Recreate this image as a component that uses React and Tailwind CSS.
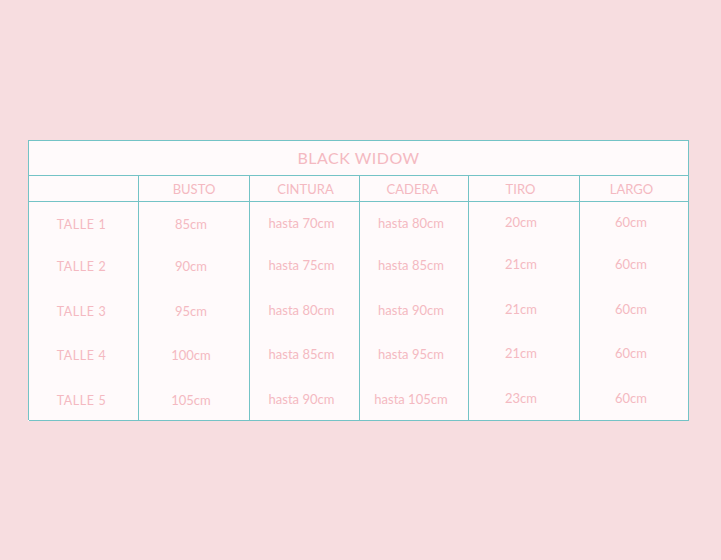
import React from 'react';

const rows = [
    { talle: 'TALLE 1', busto: '85cm', cintura: 'hasta 70cm', cadera: 'hasta 80cm', tiro: '20cm', largo: '60cm', h: 'h-[44px]', pt: 'pt-[4px]' },
    { talle: 'TALLE 2', busto: '90cm', cintura: 'hasta 75cm', cadera: 'hasta 85cm', tiro: '21cm', largo: '60cm', h: 'h-[44px]', pt: 'pt-0' },
    { talle: 'TALLE 3', busto: '95cm', cintura: 'hasta 80cm', cadera: 'hasta 90cm', tiro: '21cm', largo: '60cm', h: 'h-[44px]', pt: 'pt-[2px]' },
    { talle: 'TALLE 4', busto: '100cm', cintura: 'hasta 85cm', cadera: 'hasta 95cm', tiro: '21cm', largo: '60cm', h: 'h-[44px]', pt: 'pt-[2px]' },
    { talle: 'TALLE 5', busto: '105cm', cintura: 'hasta 90cm', cadera: 'hasta 105cm', tiro: '23cm', largo: '60cm', h: 'h-[42px]', pt: 'pt-[6px]' },
];

const headers = [
    { label: 'BUSTO', cls: 'pl-0' },
    { label: 'CINTURA', cls: 'pl-[2px]' },
    { label: 'CADERA', cls: 'pr-[3px]' },
    { label: 'TIRO', cls: 'pr-[7px]' },
    { label: 'LARGO', cls: 'pr-[5px]' },
];

const cell = 'border-x border-[#74c3c6] p-0 pr-[6px] text-center text-[13px]';

const App = () => {
    return (
        <div className="min-h-[560px] w-full bg-[#f7dde0] pt-[140px] pl-[28px]" style={{ fontFamily: '"Lato", "Open Sans", sans-serif' }}>
            <table className="border-collapse bg-[#fffafb] text-[#f4b9c1] table-fixed w-[660px]">
                <colgroup>
                    <col className="w-[110px]" />
                    <col className="w-[111px]" />
                    <col className="w-[110px]" />
                    <col className="w-[109px]" />
                    <col className="w-[111px]" />
                    <col className="w-[109px]" />
                </colgroup>
                <thead>
                    <tr>
                        <th colSpan={6} className="h-[35px] border border-[#74c3c6] p-0 text-[16px] font-normal tracking-[0.5px]">
                            BLACK WIDOW
                        </th>
                    </tr>
                    <tr>
                        <th className="h-[26px] border border-[#74c3c6] p-0"></th>
                        {headers.map((h) => (
                            <th key={h.label} className={`h-[26px] border border-[#74c3c6] p-0 text-[13px] font-normal pt-[3px] ${h.cls}`}>
                                {h.label}
                            </th>
                        ))}
                    </tr>
                </thead>
                <tbody>
                    {rows.map((r) => (
                        <tr key={r.talle} className={r.h}>
                            <td className={`border-x border-[#74c3c6] p-0 pr-[4px] text-center text-[12.5px] tracking-[0.6px] ${r.pt}`}>{r.talle}</td>
                            <td className={`${cell} pb-[2px] ${r.pt}`}>{r.busto}</td>
                            <td className={`${cell} pb-[4px] ${r.pt}`}>{r.cintura}</td>
                            <td className={`${cell} pb-[4px] ${r.pt}`}>{r.cadera}</td>
                            <td className={`${cell} pb-[6px] ${r.pt}`}>{r.tiro}</td>
                            <td className={`${cell} pb-[6px] ${r.pt}`}>{r.largo}</td>
                        </tr>
                    ))}
                    <tr>
                        <td colSpan={6} className="h-0 p-0 border-b border-[#74c3c6]"></td>
                    </tr>
                </tbody>
            </table>
        </div>
    );
};

export default App;
